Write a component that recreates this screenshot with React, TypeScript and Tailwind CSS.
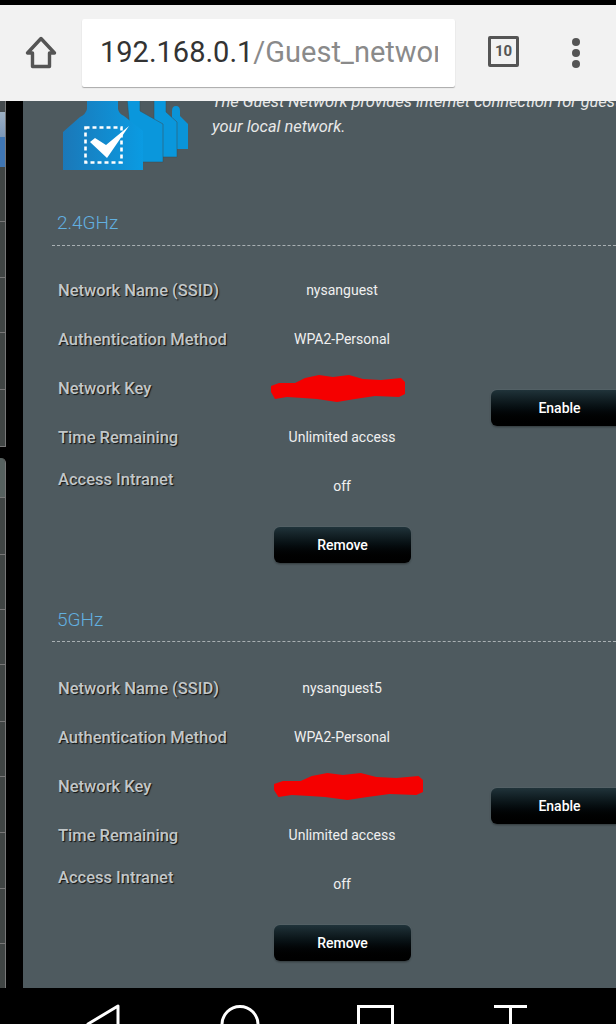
import type { ReactNode } from 'react';

const font = { fontFamily: 'Roboto, sans-serif' };

function HomeIcon() {
  return (
    <svg width="32" height="33" viewBox="0 0 32 33" fill="none" stroke="#555" strokeWidth="3.4" strokeLinejoin="round">
      <path d="M16 2.5 2.5 17H7.5V30.5H24.5V17H29.5Z" />
    </svg>
  );
}

function GuestIcon() {
  return (
    <svg width="130" height="70" viewBox="0 0 130 70" className="shrink-0">
      <defs>
        <linearGradient id="front" x1="0" x2="1" y1="0" y2="0">
          <stop offset="0" stopColor="#1b78b8" />
          <stop offset="1" stopColor="#0a9be2" />
        </linearGradient>
      </defs>
      <path d="M109 10q0-5 4-5t4 5v5l8 8v25h-16z" fill="#0a94d8" />
      <path d="M91-2h12v13l11 10v35H91z" fill="#0a97dc" stroke="#3f4c52" strokeWidth="0.5" />
      <path d="M64-3h13v13l23 13v38H70z" fill="#0a97dc" stroke="#3f4c52" strokeWidth="0.5" />
      <path d="M24-4h31v12q1 5 6 7l19 15v39H0V31l17-15q6-3 7-8z" fill="url(#front)" />
      <rect x="22.5" y="26.5" width="36" height="35" fill="none" stroke="#fff" strokeWidth="2.6" strokeDasharray="4 3" />
      <path d="M27 41 32 37 43 44 66 25 44 57z" fill="#fff" />
    </svg>
  );
}

function Scribble({ width, className }: { width: number; className?: string }) {
  return (
    <svg width={width} height="27" viewBox="0 0 134 27" preserveAspectRatio="none" className={className}>
      <path
        d="M0 11 8 8 24 8 34 3 48 0 62 2 78 0 92 4 110 5 130 3 134 7 134 19 128 22 104 21 84 24 66 27 46 24 32 23 16 22 4 24 0 17z"
        fill="#f50000"
      />
    </svg>
  );
}

function Btn({ children, className }: { children: string; className: string }) {
  return (
    <button className={`h-[36px] bg-gradient-to-b from-[#20333a] to-[#000000] rounded-[6px] text-white text-[14px] font-medium shadow-[0_1px_2px_rgba(0,0,0,0.45),0_0_0_1px_rgba(90,105,110,0.6)] ${className}`}>
      {children}
    </button>
  );
}

function Row({ label, value, lift }: { label: string; value: ReactNode; lift?: boolean }) {
  return (
    <div className="flex h-[49px] items-center">
      <div className={`w-[219px] pl-[6px] text-[16.5px] font-medium text-[#c2c7c9] [text-shadow:1px_1px_1px_#111111] ${lift ? 'pb-[12px]' : 'pt-[2px]'}`}>
        {label}
      </div>
      <div className="w-[142px] text-center text-[14px] text-[#f0f0f0]">{value}</div>
    </div>
  );
}

function Band({ title, ssid, scribble, dashClass, rowsClass }: { title: string; ssid: string; scribble: ReactNode; dashClass: string; rowsClass: string }) {
  return (
    <section>
      <h2 className="h-[24px] pl-[5px] text-[19px] leading-[24px] font-light text-[#62b0e0]">{title}</h2>
      <div className={`border-t border-dashed border-[#a9b0b3] ${dashClass}`} />
      <div className={`flex ${rowsClass}`}>
        <div>
          <Row label="Network Name (SSID)" value={ssid} />
          <Row label="Authentication Method" value="WPA2-Personal" />
          <Row label="Network Key" value={scribble} />
          <Row label="Time Remaining" value="Unlimited access" />
          <Row label="Access Intranet" value="off" lift />
          <Btn className="mt-[16px] ml-[222px] w-[137px]">Remove</Btn>
        </div>
        <div className="mt-[124px] ml-[78px]">
          <Btn className="w-[137px]">Enable</Btn>
        </div>
      </div>
    </section>
  );
}

function SideRail() {
  return (
    <div className="w-[23px] shrink-0 bg-black pr-[17px] flex flex-col">
      <div className="h-[346px] bg-[#404544] border-r border-b border-[#777777] flex flex-col overflow-hidden">
        <div className="h-[11px] bg-[#444a4d]" />
        <div className="h-[25px] bg-gradient-to-b from-[#9db0c4] to-[#7b97b8]" />
        <div className="h-[30px] bg-[#3f76b4]" />
        <div className="h-[55px] border-b border-[#777777]" />
        <div className="h-[56px] border-b border-[#777777]" />
        <div className="h-[55px] border-b border-[#777777]" />
        <div className="h-[57px] border-b border-[#777777]" />
      </div>
      <div className="mt-[11px] flex-1 bg-[#404544] border-r border-[#777777] rounded-tr-[5px] flex flex-col">
        <div className="h-[40px] bg-[#56615f] rounded-tr-[5px] border-b border-[#777777]" />
        <div className="h-[57px] border-b border-[#777777]" />
        <div className="h-[55px] border-b border-[#777777]" />
        <div className="h-[55px] border-b border-[#777777]" />
        <div className="h-[57px] border-b border-[#777777]" />
        <div className="h-[55px] border-b border-[#777777]" />
        <div className="h-[56px] border-b border-[#777777]" />
        <div className="h-[56px] border-b border-[#777777]" />
        <div className="h-[55px] border-b border-[#777777]" />
      </div>
    </div>
  );
}

export default function App() {
  return (
    <div className="h-[1024px] w-[616px] overflow-hidden bg-black flex flex-col pt-[5px]" style={font}>
      <header className="relative z-10 h-[96px] shrink-0 bg-[#f2f2f2] flex items-center">
        <div className="w-[82px] flex justify-center -mt-[2px] pr-[1px]">
          <HomeIcon />
        </div>
        <div className="h-[68px] w-[373px] bg-white rounded-[2px] shadow-[0_1px_1px_rgba(0,0,0,0.3)] pl-[18px] pr-[17px] flex items-center">
          <div className="overflow-hidden whitespace-nowrap text-[29px] text-[#333333]">
            192.168.0.1<span className="text-[#8a8a8a]">/Guest_networ</span>
          </div>
        </div>
        <div className="ml-[33px] -mt-[3px] h-[31px] w-[31px] rounded-[2px] border-[3px] border-[#555555] flex items-center justify-center text-[15px] font-bold text-[#555555]">
          10
        </div>
        <div className="ml-[53px] -mt-[1px] flex flex-col gap-[3px]">
          <div className="h-[8px] w-[8px] rounded-full bg-[#555555]" />
          <div className="h-[8px] w-[8px] rounded-full bg-[#555555]" />
          <div className="h-[8px] w-[8px] rounded-full bg-[#555555]" />
        </div>
      </header>

      <main className="flex h-[887px] shrink-0 overflow-hidden">
        <SideRail />
        <div className="flex-1 min-w-0 bg-[#4e5a5f] pl-[29px] overflow-hidden">
          <div className="flex h-[70px]">
            <div className="ml-[11px] w-[137px]">
              <GuestIcon />
            </div>
            <div className="ml-[19px] -mt-[12px] text-[16.4px] leading-[25px] italic text-[#e8e8e8] whitespace-nowrap">
              <p>The Guest Network provides internet connection for guests</p>
              <p>your local network.</p>
            </div>
          </div>
          <div className="mt-[40px]">
            <Band
              title="2.4GHz"
              ssid="nysanguest"
              dashClass="mt-[10px]"
              rowsClass="mt-[20px]"
              scribble={<Scribble width={134} className="inline-block -ml-[8px]" />}
            />
          </div>
          <div className="mt-[45px]">
            <Band
              title="5GHz"
              ssid="nysanguest5"
              dashClass="mt-[9px]"
              rowsClass="mt-[22px]"
              scribble={<Scribble width={149} className="inline-block ml-[3px]" />}
            />
          </div>
        </div>
      </main>

      <footer className="h-[36px] shrink-0 bg-black overflow-hidden">
        <svg width="616" height="36" viewBox="0 0 616 36" fill="none" stroke="#fff" strokeWidth="3">
          <path d="M118 18V50L88 36Z" strokeLinejoin="round" />
          <circle cx="240" cy="36.5" r="18" />
          <rect x="358.5" y="18.5" width="34" height="40" />
          <path d="M494 18.5H527M510.5 18.5V50" />
        </svg>
      </footer>
    </div>
  );
}
